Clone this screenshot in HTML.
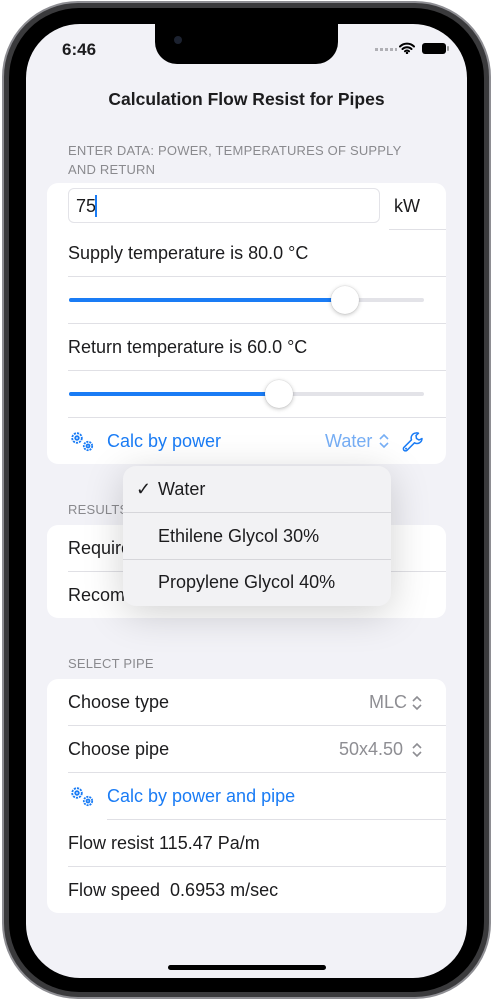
<!DOCTYPE html>
<html><head><meta charset="utf-8"><style>
*{margin:0;padding:0;box-sizing:border-box}
body{width:493px;height:1000px;background:#fff;position:relative;overflow:hidden;font-family:"Liberation Sans",sans-serif;color:#1c1c1e}
.abs{position:absolute}
.frame{left:2px;top:1px;width:489px;height:998px;border-radius:76px;background:#3a3a3c;border:2px solid #8e8e93}
.bezel{left:9px;top:8px;width:475px;height:984px;border-radius:70px;background:#000}
.screen{left:26px;top:24px;width:441px;height:954px;border-radius:54px;background:#f2f2f7;overflow:hidden}
.notch{left:155px;top:24px;width:183px;height:40px;background:#000;border-radius:0 0 22px 22px}
.card{background:#fff;border-radius:11px;left:47px;width:399px}
.t{font-size:18px;position:absolute;white-space:nowrap}
.line{position:absolute;height:1px;background:#e0e0e5}
.hdr{font-size:13px;color:#8a8a8e;position:absolute;left:68px;letter-spacing:.2px}
.blue{color:#1a7cf5}
.track{position:absolute;height:4px;border-radius:2px;background:#e3e3e8}
.fill{position:absolute;height:4px;border-radius:2px;background:#1a7cf5}
.knob{position:absolute;width:28px;height:28px;border-radius:50%;background:#fff;box-shadow:0 1px 4px rgba(0,0,0,.25),0 0 1px rgba(0,0,0,.2)}
.gray{color:#8e8e93}
</style></head><body>
<div class="abs frame"></div>
<div class="abs bezel"></div>
<div class="abs screen"></div>
<div class="abs notch"></div>
<div class="abs" style="left:174px;top:36px;width:8px;height:8px;border-radius:50%;background:#1c2230"></div>
<div class="t" style="left:62px;top:40px;font-size:17px;font-weight:bold">6:46</div>
<div class="abs" style="left:375px;top:48px;width:22px;height:3px;background:repeating-linear-gradient(90deg,#b0b0b5 0 3px,transparent 3px 5px)"></div>
<svg class="abs" style="left:399px;top:42px" width="16" height="12" viewBox="0 0 16 12"><path d="M1 4.5a10 10 0 0 1 14 0M3.5 7a6.5 6.5 0 0 1 9 0M6 9.3a3 3 0 0 1 4 0" stroke="#000" stroke-width="2" fill="none" stroke-linecap="round"/><circle cx="8" cy="11" r="1.2"/></svg>
<div class="abs" style="left:422px;top:43px;width:24px;height:11px;border-radius:3px;background:#000"></div>
<div class="abs" style="left:447px;top:46px;width:2px;height:5px;background:#999;border-radius:1px"></div>

<div class="t" style="left:0;width:493px;text-align:center;top:89px;font-size:17.5px;font-weight:bold">Calculation Flow Resist for Pipes</div>
<div class="hdr" style="top:141px;line-height:19px">ENTER DATA: POWER, TEMPERATURES OF SUPPLY<br>AND RETURN</div>

<div class="abs card" style="top:183px;height:281px"></div>
<div class="abs" style="left:68px;top:188px;width:312px;height:35px;border:1px solid #e3e3e8;border-radius:6px"></div>
<div class="t" style="left:76px;top:196px">75</div>
<div class="abs" style="left:95px;top:195px;width:2px;height:22px;background:#1a7cf5"></div>
<div class="t" style="left:394px;top:196px">kW</div>
<div class="line" style="left:389px;right:47px;top:229px"></div>
<div class="t" style="left:68px;top:243px">Supply temperature is 80.0 °C</div>
<div class="line" style="left:68px;right:47px;top:276px"></div>
<div class="track" style="left:69px;top:298px;width:355px"></div>
<div class="fill" style="left:69px;top:298px;width:276px"></div>
<div class="knob" style="left:331px;top:286px"></div>
<div class="line" style="left:68px;right:47px;top:323px"></div>
<div class="t" style="left:68px;top:337px">Return temperature is 60.0 °C</div>
<div class="line" style="left:68px;right:47px;top:370px"></div>
<div class="track" style="left:69px;top:392px;width:355px"></div>
<div class="fill" style="left:69px;top:392px;width:210px"></div>
<div class="knob" style="left:265px;top:380px"></div>
<div class="line" style="left:68px;right:47px;top:417px"></div>
<svg class="abs" style="left:69px;top:431px" width="28" height="22" viewBox="0 0 28 22"><g fill="none" stroke="#1a7cf5" stroke-width="1.8"><circle cx="8" cy="7" r="4.8" stroke-dasharray="2.2 1"/><circle cx="8" cy="7" r="1.8"/><circle cx="19" cy="15" r="4.2" stroke-dasharray="2 1"/><circle cx="19" cy="15" r="1.5"/></g></svg>
<div class="t blue" style="left:107px;top:431px">Calc by power</div>
<div class="t" style="left:325px;top:431px;color:#76aef5">Water</div>
<svg class="abs" style="left:378px;top:433px" width="12" height="16" viewBox="0 0 12 16"><path d="M2 6l4-4 4 4M2 10l4 4 4-4" stroke="#76aef5" stroke-width="1.6" fill="none"/></svg>
<svg class="abs" style="left:401px;top:430px" width="24" height="24" viewBox="0 0 24 24"><path d="M15 3a5 5 0 0 0-4.5 6.8L3 17.3a2 2 0 0 0 3 3l7.5-7.5A5 5 0 0 0 21 8.5l-3 1.5-2.5-1.5-.5-3 2.5-2.3A5 5 0 0 0 15 3z" fill="none" stroke="#1a7cf5" stroke-width="1.5" stroke-linejoin="round"/><circle cx="5" cy="18.6" r="1" fill="#1a7cf5"/></svg>

<div class="hdr" style="top:502px">RESULTS</div>
<div class="abs card" style="top:525px;height:93px"></div>
<div class="t" style="left:68px;top:538px">Required</div>
<div class="line" style="left:68px;right:47px;top:571px"></div>
<div class="t" style="left:68px;top:585px">Recommended</div>

<div class="abs" style="left:123px;top:466px;width:268px;height:140px;border-radius:13px;background:#f2f2f4;box-shadow:0 8px 40px rgba(0,0,0,.18)"></div>
<div class="t" style="left:136px;top:479px">✓</div>
<div class="t" style="left:158px;top:479px">Water</div>
<div class="line" style="left:123px;width:268px;top:512px;background:#d6d6da"></div>
<div class="t" style="left:158px;top:526px">Ethilene Glycol 30%</div>
<div class="line" style="left:123px;width:268px;top:559px;background:#d6d6da"></div>
<div class="t" style="left:158px;top:572px">Propylene Glycol 40%</div>

<div class="hdr" style="top:656px">SELECT PIPE</div>
<div class="abs card" style="top:679px;height:234px"></div>
<div class="t" style="left:68px;top:692px">Choose type</div>
<div class="t gray" style="left:369px;top:692px">MLC</div>
<svg class="abs" style="left:411px;top:695px" width="12" height="16" viewBox="0 0 12 16"><path d="M2 6l4-4 4 4M2 10l4 4 4-4" stroke="#8e8e93" stroke-width="1.6" fill="none"/></svg>
<div class="line" style="left:68px;right:47px;top:725px"></div>
<div class="t" style="left:68px;top:739px">Choose pipe</div>
<div class="t gray" style="left:339px;top:739px">50x4.50</div>
<svg class="abs" style="left:411px;top:742px" width="12" height="16" viewBox="0 0 12 16"><path d="M2 6l4-4 4 4M2 10l4 4 4-4" stroke="#8e8e93" stroke-width="1.6" fill="none"/></svg>
<div class="line" style="left:68px;right:47px;top:772px"></div>
<svg class="abs" style="left:69px;top:786px" width="28" height="22" viewBox="0 0 28 22"><g fill="none" stroke="#1a7cf5" stroke-width="1.8"><circle cx="8" cy="7" r="4.8" stroke-dasharray="2.2 1"/><circle cx="8" cy="7" r="1.8"/><circle cx="19" cy="15" r="4.2" stroke-dasharray="2 1"/><circle cx="19" cy="15" r="1.5"/></g></svg>
<div class="t blue" style="left:107px;top:786px">Calc by power and pipe</div>
<div class="line" style="left:107px;right:47px;top:819px"></div>
<div class="t" style="left:68px;top:833px">Flow resist 115.47 Pa/m</div>
<div class="line" style="left:68px;right:47px;top:866px"></div>
<div class="t" style="left:68px;top:880px">Flow speed&nbsp; 0.6953 m/sec</div>

<div class="abs" style="left:168px;top:965px;width:158px;height:5px;border-radius:3px;background:#000"></div>
</body></html>
